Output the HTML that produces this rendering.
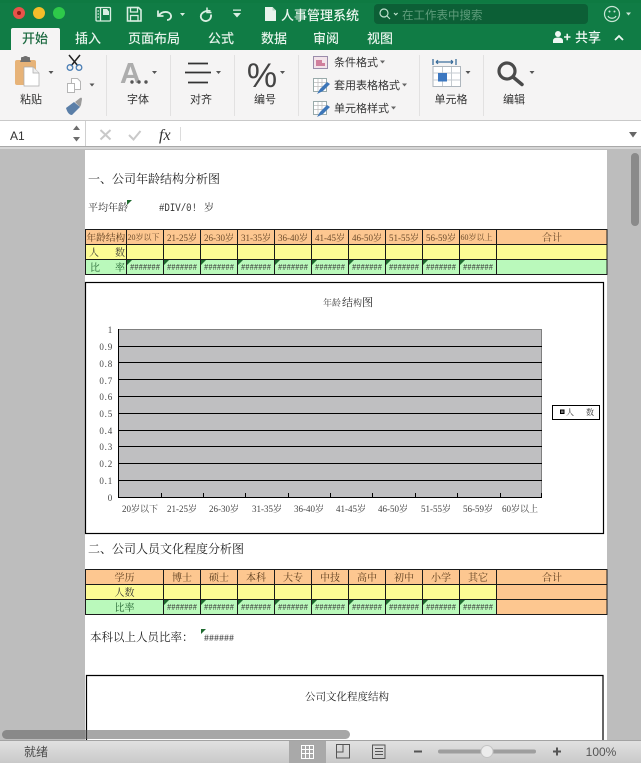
<!DOCTYPE html>
<html lang="zh"><head><meta charset="utf-8"><title>人事管理系统</title>
<style>
html,body{margin:0;padding:0;background:#bdbdbd}
svg{display:block}
.u{font-family:"Liberation Sans","Noto Sans CJK SC",sans-serif}
.s{font-family:"Liberation Serif","Noto Serif CJK SC",serif}
.m{font-family:"Liberation Mono",monospace}
.tab{font-size:13px;fill:#e4f2e9;text-anchor:middle;font-weight:500}
.lb{font-size:11px;fill:#333;text-anchor:middle}
.lf{font-size:11px;fill:#333}
.h{font-size:9px;fill:#6b4a2a;text-anchor:middle}
.g{font-size:10px;fill:#333;text-anchor:middle}
.n{font-size:9px;fill:#444;text-anchor:end;letter-spacing:.8px}
.x{font-size:9px;fill:#444;text-anchor:middle}
.hs{font-size:9.5px;fill:#333}
</style></head><body>
<svg width="641" height="763" viewBox="0 0 641 763" xmlns="http://www.w3.org/2000/svg">
<defs>
<linearGradient id="sb" x1="0" y1="0" x2="0" y2="1"><stop offset="0" stop-color="#e2e2e2"/><stop offset="1" stop-color="#c9c9c9"/></linearGradient>
</defs>
<!-- sheet -->
<rect x="0" y="149" width="641" height="591" fill="#bdbdbd"/>
<rect x="85" y="150" width="522" height="590" fill="#fff"/>

<g class="s">
<text x="88" y="183" font-size="12" fill="#222">一、公司年龄结构分析图</text>
<text x="88" y="211" font-size="10" fill="#333">平均年龄</text>
<path d="M127 200h5l-5 5z" fill="#1f6b30"/>
<text x="159" y="211" font-size="11" fill="#333" class="m" textLength="38" lengthAdjust="spacingAndGlyphs">#DIV/0!</text>
<text x="204" y="211" font-size="10" fill="#333">岁</text>
</g>

<!-- table 1 -->
<rect x="85" y="229" width="522" height="15.3" fill="#fdc790"/>
<rect x="85" y="244.3" width="522" height="15" fill="#fdfb94"/>
<rect x="85" y="259.3" width="522" height="15" fill="#baf9bb"/>
<g stroke="#1a1a1a" stroke-width="1" fill="none">
<path d="M85 229.5H607M85 244.5H607M85 259.5H607M85 274.5H607"/>
<path d="M85.5 229V275M126.5 229V275M163.5 229V275M200.5 229V275M237.5 229V275M274.5 229V275M311.5 229V275M348.5 229V275M385.5 229V275M422.5 229V275M459.5 229V275M496.5 229V275M607 229V275"/>
</g>
<g class="s">
<text x="86.5" y="241" font-size="9.700" fill="#5a3b1c">年龄结构</text>
<text x="127.5" y="240" class="h" style="text-anchor:start;font-size:8px">20岁以下</text>
<text x="182" y="241" class="h">21-25岁</text>
<text x="219" y="241" class="h">26-30岁</text>
<text x="256" y="241" class="h">31-35岁</text>
<text x="293" y="241" class="h">36-40岁</text>
<text x="330" y="241" class="h">41-45岁</text>
<text x="367" y="241" class="h">46-50岁</text>
<text x="404" y="241" class="h">51-55岁</text>
<text x="441" y="241" class="h">56-59岁</text>
<text x="460.5" y="240" class="h" style="text-anchor:start;font-size:8px">60岁以上</text>
<text x="552" y="241" class="h" style="font-size:10px">合计</text>
<text x="89" y="256" font-size="10" fill="#333">人</text><text x="115" y="256" font-size="10" fill="#333">数</text>
<text x="90" y="271" font-size="10" fill="#1d5d2b">比</text><text x="115" y="271" font-size="10" fill="#1d5d2b">率</text>
</g>
<g class="m hs">
<text x="130" y="270" textLength="30" lengthAdjust="spacingAndGlyphs">#######</text>
<text x="167" y="270" textLength="30" lengthAdjust="spacingAndGlyphs">#######</text>
<text x="204" y="270" textLength="30" lengthAdjust="spacingAndGlyphs">#######</text>
<text x="241" y="270" textLength="30" lengthAdjust="spacingAndGlyphs">#######</text>
<text x="278" y="270" textLength="30" lengthAdjust="spacingAndGlyphs">#######</text>
<text x="315" y="270" textLength="30" lengthAdjust="spacingAndGlyphs">#######</text>
<text x="352" y="270" textLength="30" lengthAdjust="spacingAndGlyphs">#######</text>
<text x="389" y="270" textLength="30" lengthAdjust="spacingAndGlyphs">#######</text>
<text x="426" y="270" textLength="30" lengthAdjust="spacingAndGlyphs">#######</text>
<text x="463" y="270" textLength="30" lengthAdjust="spacingAndGlyphs">#######</text>
</g>
<path fill="#1f6b30" d="M127 260h5l-5 5zM164 260h5l-5 5zM201 260h5l-5 5zM238 260h5l-5 5zM275 260h5l-5 5zM312 260h5l-5 5zM349 260h5l-5 5zM386 260h5l-5 5zM423 260h5l-5 5zM460 260h5l-5 5z"/>

<!-- chart 1 -->
<rect x="85.5" y="282.5" width="518" height="251" fill="#fff" stroke="#000" stroke-width="1.2"/>
<g class="s">
<text x="323" y="306" font-size="9" fill="#444">年龄</text>
<text x="342" y="306" font-size="11" fill="#333">结</text><text x="353" y="306" font-size="9" fill="#333">构</text><text x="362" y="306" font-size="11" fill="#222">图</text>
</g>
<rect x="118.5" y="329.5" width="423" height="168" fill="#bfbfc1" stroke="#7f7f7f" stroke-width="1"/>
<path stroke="#000" stroke-width="1" fill="none" d="M118 346.5H542M118 362.5H542M118 379.5H542M118 396.5H542M118 413.5H542M118 430.5H542M118 446.5H542M118 463.5H542M118 480.5H542M118 497.5H542"/>
<path stroke="#000" stroke-width="1" fill="none" d="M118.5 329V498M161.500 493V498M203.500 493V498M245.500 493V498M288.500 493V498M330.500 493V498M372.500 493V498M415.500 493V498M457.500 493V498M500.500 493V498M541.500 493V498"/>
<g class="s">
<text x="113" y="333" class="n">1</text>
<text x="113" y="350" class="n">0.9</text>
<text x="113" y="367" class="n">0.8</text>
<text x="113" y="384" class="n">0.7</text>
<text x="113" y="400" class="n">0.6</text>
<text x="113" y="417" class="n">0.5</text>
<text x="113" y="434" class="n">0.4</text>
<text x="113" y="450" class="n">0.3</text>
<text x="113" y="467" class="n">0.2</text>
<text x="113" y="484" class="n">0.1</text>
<text x="113" y="501" class="n">0</text>
<text x="140" y="512" class="x">20岁以下</text>
<text x="182" y="512" class="x">21-25岁</text>
<text x="224" y="512" class="x">26-30岁</text>
<text x="267" y="512" class="x">31-35岁</text>
<text x="309" y="512" class="x">36-40岁</text>
<text x="351" y="512" class="x">41-45岁</text>
<text x="393" y="512" class="x">46-50岁</text>
<text x="436" y="512" class="x">51-55岁</text>
<text x="478" y="512" class="x">56-59岁</text>
<text x="520" y="512" class="x">60岁以上</text>
</g>
<rect x="552.5" y="405.5" width="47" height="14" fill="#fff" stroke="#000"/>
<rect x="560.5" y="410" width="3.5" height="3.5" fill="#777" stroke="#000"/>
<g class="s"><text x="566" y="415" font-size="8" fill="#333">人</text><text x="586" y="415" font-size="8" fill="#333">数</text></g>

<text x="88" y="553" font-size="12" fill="#222" class="s">二、公司人员文化程度分析图</text>

<!-- table 2 -->
<rect x="85" y="569" width="522" height="15.3" fill="#fdc790"/>
<rect x="85" y="584.3" width="412" height="15" fill="#fdfb94"/>
<rect x="85" y="599.3" width="412" height="15" fill="#baf9bb"/>
<rect x="496.5" y="584.3" width="110.5" height="30" fill="#fdc790"/>
<g stroke="#1a1a1a" stroke-width="1" fill="none">
<path d="M85 569.5H607M85 584.5H607M85 599.5H607M85 614.5H607"/>
<path d="M85.5 569V615M163.5 569V615M200.5 569V615M237.5 569V615M274.5 569V615M311.5 569V615M348.5 569V615M385.5 569V615M422.5 569V615M459.5 569V615M496.5 569V615M607 569V615"/>
</g>
<g class="s">
<g font-size="10" fill="#5a3b1c" text-anchor="middle">
<text x="124.5" y="581">学历</text>
<text x="182" y="581">博士</text><text x="219" y="581">硕士</text><text x="256" y="581">本科</text><text x="293" y="581">大专</text><text x="330" y="581">中技</text><text x="367" y="581">高中</text><text x="404" y="581">初中</text><text x="441" y="581">小学</text><text x="478" y="581">其它</text><text x="552" y="581">合计</text>
</g>
<text x="124.5" y="596" class="g">人数</text>
<text x="124.5" y="611" class="g" style="fill:#1d5d2b">比率</text>
</g>
<g class="m hs">
<text x="167" y="610" textLength="30" lengthAdjust="spacingAndGlyphs">#######</text>
<text x="204" y="610" textLength="30" lengthAdjust="spacingAndGlyphs">#######</text>
<text x="241" y="610" textLength="30" lengthAdjust="spacingAndGlyphs">#######</text>
<text x="278" y="610" textLength="30" lengthAdjust="spacingAndGlyphs">#######</text>
<text x="315" y="610" textLength="30" lengthAdjust="spacingAndGlyphs">#######</text>
<text x="352" y="610" textLength="30" lengthAdjust="spacingAndGlyphs">#######</text>
<text x="389" y="610" textLength="30" lengthAdjust="spacingAndGlyphs">#######</text>
<text x="426" y="610" textLength="30" lengthAdjust="spacingAndGlyphs">#######</text>
<text x="463" y="610" textLength="30" lengthAdjust="spacingAndGlyphs">#######</text>
</g>
<path fill="#1f6b30" d="M164 600h5l-5 5zM201 600h5l-5 5zM238 600h5l-5 5zM275 600h5l-5 5zM312 600h5l-5 5zM349 600h5l-5 5zM386 600h5l-5 5zM423 600h5l-5 5zM460 600h5l-5 5z"/>

<text x="90" y="641" font-size="11.5" fill="#222" class="s">本科以上人员比率：</text>
<path d="M201 629h5l-5 5z" fill="#1f6b30"/>
<text x="204" y="641" class="m" font-size="10.5" fill="#333" textLength="30" lengthAdjust="spacingAndGlyphs">######</text>

<!-- chart 2 -->
<path d="M86.5 740V675.5H603V740" fill="#fff" stroke="#000" stroke-width="1.2"/>
<text x="347" y="700" font-size="10.5" fill="#222" text-anchor="middle" class="s">公司文化程度结构</text>

<!-- scrollbars -->
<rect x="2" y="730" width="348" height="9" rx="4.5" fill="#5e5e5e" fill-opacity=".55"/>
<rect x="631" y="153" width="8" height="73" rx="4" fill="#8a8a8a"/>

<!-- title bar -->
<rect x="0" y="0" width="641" height="50" fill="#107c45"/>
<rect x="0" y="0" width="641" height="3" fill="#0e7a42"/>
<circle cx="19" cy="13" r="6" fill="#e8534a"/><circle cx="19" cy="13" r="2" fill="#8a1b15"/>
<circle cx="39" cy="13" r="6" fill="#f5bd2a"/>
<circle cx="59" cy="13" r="6" fill="#2ec94a"/>
<!-- sidebar -->
<g stroke="#d9eee2" fill="none" stroke-width="1.3">
<rect x="96" y="7.5" width="14.5" height="13.5" rx="1"/>
<path d="M100.5 7.5V21"/>
<path d="M97.5 11h1.5M97.5 14h1.5M97.5 17h1.5"/>
<path d="M103 9h4l2 2.500V15h-6z" fill="#d9eee2" stroke="none"/>
<!-- save -->
<path d="M127.500 7.500H138.500L141 10V21H127.500Z" stroke-width="1.600"/>
<rect x="130.500" y="7.500" width="7" height="4.500"/>
<rect x="130.500" y="15.500" width="7.500" height="5.500"/>
<!-- undo -->
<path d="M158 10.500V16H163.500" stroke-width="1.800"/>
<path d="M159 15.500C162 10.500 170 11 171 15.500C171.500 18 169.500 20 167 20" stroke-width="1.800"/>
<!-- redo -->
<path d="M210.500 11C206 10 202 12.500 201 15C200 19 203.500 21.500 206.500 21C209.500 20.500 211.500 18 211 14.500" stroke-width="1.800"/>
<path d="M207 7.500V12.500H211.500" stroke-width="1.500"/>
</g>
<path d="M180 13h5l-2.500 3zM233 13h8l-4 4.500zM233 9.500h8v1.200h-8z" fill="#d9eee2"/>
<!-- doc -->
<path d="M265 7h7.500l3.500 3.500V21h-11z" fill="#e8f3ec"/><path d="M272.500 7v3.500h3.500" fill="#b7d7c4"/>
<text x="281" y="20" class="u" font-size="13" fill="#eaf5ee" font-weight="500">人事管理系统</text>
<!-- search -->
<rect x="374" y="4" width="214" height="20" rx="4" fill="#0c5f36"/>
<g stroke="#bfe0cd" fill="none" stroke-width="1.200"><circle cx="384" cy="13" r="4"/><path d="M387 16l3 3M394 13l1.800 1.800 1.800-1.800"/></g>
<text x="402" y="19" class="u" font-size="11.500" fill="#5f9d7c">在工作表中搜索</text>
<!-- smile -->
<g stroke="#c9e5d5" fill="none" stroke-width="1.200"><circle cx="612" cy="14" r="7.500"/><path d="M608 16c1.500 3 6.500 3 8 0"/></g>
<circle cx="609.500" cy="11.500" r="1" fill="#c9e5d5"/><circle cx="614.500" cy="11.500" r="1" fill="#c9e5d5"/>
<path d="M626 12.500h5l-2.500 3z" fill="#c9e5d5"/>

<!-- tabs -->
<path d="M11 50V30q0-2 2-2h45q2 0 2 2V50z" fill="#f5f4f4"/>
<g class="u">
<text x="35" y="43" class="tab" style="fill:#1c6a40">开始</text>
<text x="88" y="43" class="tab">插入</text>
<text x="154" y="43" class="tab">页面布局</text>
<text x="221" y="43" class="tab">公式</text>
<text x="274" y="43" class="tab">数据</text>
<text x="326" y="43" class="tab">审阅</text>
<text x="380" y="43" class="tab">视图</text>
<text x="575" y="42" font-size="13" font-weight="500" fill="#eef7f2">共享</text>
</g>
<circle cx="558" cy="34" r="3" fill="#eef7f2"/><path d="M553 43v-2.500q0-3 5-3t5 3v2.500z" fill="#eef7f2"/>
<path d="M564 37h6.500M567.250 33.750v6.500" stroke="#eef7f2" stroke-width="1.600"/>
<path d="M615 40l4-4 4 4" stroke="#eef7f2" stroke-width="1.800" fill="none"/>

<!-- ribbon -->
<rect x="0" y="50" width="641" height="70" fill="#f5f4f4"/>
<rect x="0" y="120" width="641" height="1" fill="#c9c9c9"/>
<path stroke="#e2e1e1" d="M106.500 55V116M170.500 55V116M234.500 55V116M298.500 55V116M419.500 55V116M483.500 55V116"/>
<!-- paste -->
<rect x="15" y="60" width="21" height="25" rx="2" fill="#e7b378"/>
<path d="M21 60v-2q0-1 1-1h1q1-1 2.500-1t2.500 1h1q1 0 1 1v2l1 2H20z" fill="#6f6f6f"/>
<path d="M24 67h9l6 6v13H24z" fill="#fff" stroke="#aaa" stroke-width=".7"/>
<path d="M33 67v6h6" fill="#eee" stroke="#aaa" stroke-width=".7"/>
<path d="M48.500 71h5l-2.500 3z M152 71h5l-2.500 3z M216 71h5l-2.500 3z M280 71h5l-2.500 3z M89.500 83.500h5l-2.500 3z M465.500 71h5l-2.500 3z M529.500 71h5l-2.500 3z" fill="#555"/>
<!-- scissors -->
<g fill="none" stroke="#222" stroke-width="1.500"><path d="M69 55l9 11M80 55l-9 11"/></g>
<g fill="none" stroke="#4c7fb5" stroke-width="1.300"><circle cx="70" cy="67.500" r="2.800"/><circle cx="79" cy="67.500" r="2.800"/></g>
<!-- copy -->
<g fill="#fff" stroke="#b5b5b5"><path d="M71.500 78.500h6l3 3v8h-9z"/><path d="M67.500 83.500h7l0 9h-7z"/></g>
<!-- brush -->
<path d="M66 108l8-6 6 5-8 8q-4 0-6-7z" fill="#5b7fa8"/><path d="M75 102l5-4q2-1 2 1l-1 6-1 2z" fill="#9a9a9a"/>
<!-- font A -->
<text x="120" y="83" class="u" font-size="29" font-weight="700" fill="#adadad">A</text>
<circle cx="132" cy="82" r="1.700" fill="#555"/><circle cx="139" cy="82" r="1.700" fill="#555"/><circle cx="146" cy="82" r="1.700" fill="#555"/>
<!-- align -->
<path stroke="#333" stroke-width="1.700" d="M188 63.500H208M185 72.500H211M188 82.500H208"/>
<text x="262" y="87" class="u" font-size="34" fill="#444" text-anchor="middle">%</text>
<!-- styles icons -->
<rect x="313.500" y="56.500" width="14" height="12" fill="#f3e4ea" stroke="#9a8cab"/>
<path d="M316 60h6v3h3v3h-9z" fill="#d07f9c"/>
<rect x="313.500" y="78.500" width="13" height="13" fill="#fff" stroke="#9aa"/>
<path d="M314 82.500h12M314 86.500h12M318 79v12M322 79v12" stroke="#bbb" stroke-width=".7"/>
<path d="M317 94l3-5 7-7 3 2-7 7z" fill="#3d76b8"/>
<rect x="313.500" y="101.500" width="13" height="13" fill="#fff" stroke="#9aa"/>
<path d="M314 105.500h12M314 109.500h12M318 102v12M322 102v12" stroke="#bbb" stroke-width=".7"/>
<path d="M317 117l3-5 7-7 3 2-7 7z" fill="#3d76b8"/>
<g class="u">
<text x="334" y="66" class="lf">条件格式</text>
<text x="334" y="89" class="lf">套用表格格式</text>
<text x="334" y="112" class="lf">单元格样式</text>
<text x="31" y="103" class="lb">粘贴</text>
<text x="138" y="103" class="lb">字体</text>
<text x="201" y="103" class="lb">对齐</text>
<text x="265" y="103" class="lb">编号</text>
<text x="451" y="103" class="lb">单元格</text>
<text x="514" y="103" class="lb">编辑</text>
</g>
<path d="M380 60.500h5l-2.500 3zM402 83.500h5l-2.500 3zM391 106.500h5l-2.500 3z" fill="#666"/>
<!-- cells icon -->
<path stroke="#3d6f9c" stroke-width="1.300" fill="none" d="M433 59v6M456 59v6M436 62H453M436 62l2-1.800M436 62l2 1.800M453 62l-2-1.800M453 62l-2 1.800"/>
<rect x="433" y="66.500" width="27.500" height="20" fill="#fff" stroke="#aeb6bd"/>
<path stroke="#c5cbd0" d="M433 73H460M433 80H460M442.500 67V86M451.500 67V86"/>
<rect x="438" y="73" width="9" height="8.500" fill="#3d78c0"/>
<!-- search icon -->
<circle cx="507" cy="71" r="8" fill="none" stroke="#4a4a4a" stroke-width="3.200"/>
<path d="M513 77l9 7.500" stroke="#4a4a4a" stroke-width="3.500" stroke-linecap="round"/>

<!-- formula bar -->
<rect x="0" y="121" width="641" height="25" fill="#fff"/>
<rect x="0" y="146" width="641" height="3" fill="#d6d6d6"/>
<rect x="0" y="146" width="641" height="1" fill="#a9a9a9"/>
<rect x="85" y="121" width="1" height="25" fill="#d0d0d0"/>
<rect x="180" y="127" width="1" height="14" fill="#dcdcdc"/>
<text x="10" y="140" class="u" font-size="12" fill="#333">A1</text>
<path d="M73 130l3.500-4.500L80 130zM73 137h7l-3.500 4.500z" fill="#6d6d6d"/>
<path d="M100.500 130l10 9.500M110.500 130l-10 9.500M129 135l4.500 4.500 7-8.500" stroke="#c9c9c9" stroke-width="2" fill="none"/>
<text x="159" y="140" class="s" font-size="16" font-style="italic" fill="#333">fx</text>
<path d="M629 132h8l-4 5.500z" fill="#666"/>

<!-- status bar -->
<rect x="0" y="740" width="641" height="23" fill="url(#sb)"/>
<rect x="0" y="740" width="641" height="1" fill="#a3a3a3"/>
<text x="24" y="756" class="u" font-size="12" fill="#4a4a4a">就绪</text>
<rect x="289" y="741" width="37" height="22" fill="#a9a9a9"/>
<g stroke="#fff" fill="none"><rect x="301.500" y="745.500" width="12" height="13"/><path d="M305.500 746V758M309.500 746V758M302 749.500H313M302 753.500H313"/></g>
<g stroke="#555" fill="none"><rect x="336.500" y="744.500" width="13" height="13.500"/><path d="M343 745V752H337"/>
<rect x="372.500" y="745" width="12.500" height="13.500"/><path d="M375 748.500H383M375 751.500H383M375 754.500H383"/></g>
<path d="M414 751.500h8" stroke="#555" stroke-width="2"/>
<rect x="438" y="749.500" width="98" height="4" rx="2" fill="#9e9e9e"/>
<circle cx="487" cy="751.500" r="6" fill="#ececec" stroke="#c4c4c4"/>
<path d="M553 751.500h8M557 747.500v8" stroke="#555" stroke-width="2"/>
<text x="601" y="756" class="u" font-size="12" fill="#555" text-anchor="middle">100%</text>
</svg>
</body></html>
